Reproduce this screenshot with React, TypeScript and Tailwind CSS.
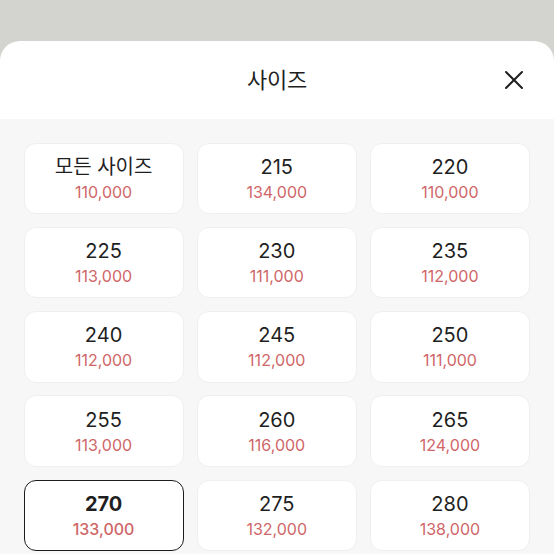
import React, { useState } from 'react';

const sizes = [
  { label: '모든 사이즈', price: '110,000' },
  { label: '215', price: '134,000' },
  { label: '220', price: '110,000' },
  { label: '225', price: '113,000' },
  { label: '230', price: '111,000' },
  { label: '235', price: '112,000' },
  { label: '240', price: '112,000' },
  { label: '245', price: '112,000' },
  { label: '250', price: '111,000' },
  { label: '255', price: '113,000' },
  { label: '260', price: '116,000' },
  { label: '265', price: '124,000' },
  { label: '270', price: '133,000' },
  { label: '275', price: '132,000' },
  { label: '280', price: '138,000' },
];

const App = () => {
  const [selected, setSelected] = useState('270');

  return (
    <div className="h-[554px] w-[554px] overflow-hidden bg-[#d3d4cf] pt-[41px] font-['Inter','Noto_Sans_CJK_KR',sans-serif]">
      <div className="h-full rounded-t-[20px] bg-white overflow-hidden flex flex-col">
        {/* Header */}
        <div className="relative h-[78px] flex items-center justify-center shrink-0">
          <h2 className="text-[22px] text-[#1f1f1f] tracking-[-0.3px]">사이즈</h2>
          <button className="absolute right-[30px] top-[29px] w-[20px] h-[20px] flex items-center justify-center">
            <svg width="20" height="20" viewBox="0 0 20 20" fill="none">
              <path d="M2 2L18 18M18 2L2 18" stroke="#1f1f1f" strokeWidth="2" strokeLinecap="round" />
            </svg>
          </button>
        </div>

        {/* Grid */}
        <div className="flex-1 bg-[#f7f7f7] pl-[23.5px] pr-[24px] pt-[23.5px]">
          <div className="grid grid-cols-3 gap-x-[13px] gap-y-[12.75px]">
            {sizes.map((s) => {
              const active = s.label === selected;
              return (
                <button
                  key={s.label}
                  onClick={() => setSelected(s.label)}
                  className={`h-[71.5px] rounded-[12px] bg-white flex flex-col items-center justify-center gap-[1px] pt-[2px] ${
                    active ? 'border-[1.5px] border-[#1c1c1c]' : 'border border-[#efefef]'
                  }`}
                >
                  <span
                    className={`text-[20px] leading-[24px] text-[#1f1f1f] ${active ? 'font-bold' : ''}`}
                  >
                    {s.label}
                  </span>
                  <span className={`text-[16px] leading-[24px] text-[#cf6668] ${active ? 'font-medium' : ''}`}>
                    {s.price}
                  </span>
                </button>
              );
            })}
          </div>
        </div>
      </div>
    </div>
  );
};

export default App;
